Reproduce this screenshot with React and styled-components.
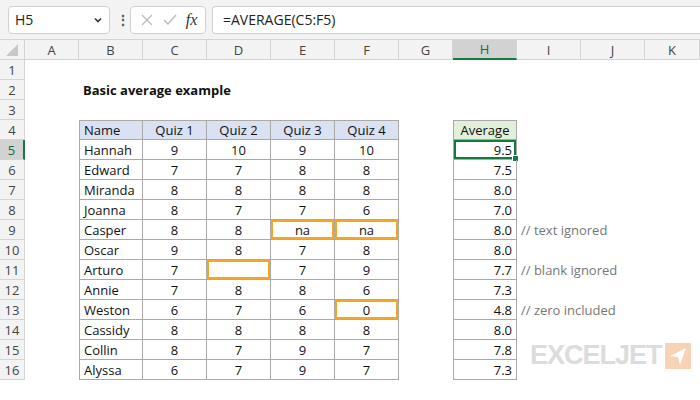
import React from 'react'
import styled, { createGlobalStyle } from 'styled-components'

const Global = createGlobalStyle`
  body { margin: 0; background: #fff; font-family: "Segoe UI", "Open Sans", "Noto Sans", sans-serif; }
`

const Page = styled.div`
  width: 700px;
  height: 400px;
  overflow: hidden;
  position: relative;
`

const Toolbar = styled.div`
  height: 40px;
  display: flex;
  align-items: center;
  gap: 6px;
  padding: 0 0 0 8px;
  background: #f3f3f3;
  border-bottom: 1px solid #d4d4d4;
  box-sizing: border-box;
`

const Box = styled.div`
  height: 28px;
  background: #fff;
  border: 1px solid #d0d0d0;
  border-radius: 4px;
  display: flex;
  align-items: center;
  box-sizing: border-box;
  font-size: 14px;
  color: #222;
`

const NameBox = styled(Box)`
  width: 102px;
  padding: 0 6px;
  justify-content: space-between;
`

const FxBox = styled(Box)`
  width: 76px;
  padding: 0 4px;
  justify-content: space-around;
`

const FormulaBox = styled(Box)`
  flex: 1;
  padding: 0 10px;
  border-right: none;
  border-radius: 4px 0 0 4px;
`

const Dots = styled.div`
  color: #555;
  font-weight: bold;
  font-size: 14px;
  width: 8px;
  text-align: center;
`

const Fx = styled.span`
  font-family: "Liberation Serif", serif;
  font-style: italic;
  font-size: 16px;
  color: #333;
`

const Grid = styled.div`
  display: grid;
  grid-template-columns: 25px 54px 64px 64px 64px 64px 64px 54px 64px 64px 64px 55px;
  grid-auto-rows: 20px;
`

const Cell = styled.div`
  box-sizing: border-box;
  font-size: 13px;
  display: flex;
  align-items: center;
  padding: 0 4px;
  white-space: nowrap;
  color: ${p => p.$gray ? '#777' : '#111'};
  font-weight: ${p => p.$bold ? 'bold' : 'normal'};
  justify-content: ${p => p.$align === 'c' ? 'center' : p.$align === 'r' ? 'flex-end' : 'flex-start'};
  background: ${p => p.$fill || 'transparent'};
  border-right: ${p => p.$table ? '1px solid #a9a9a9' : 'none'};
  border-bottom: ${p => p.$table ? '1px solid #a9a9a9' : 'none'};
  border-left: ${p => p.$tl ? '1px solid #a9a9a9' : 'none'};
  border-top: ${p => p.$tt ? '1px solid #a9a9a9' : 'none'};
  box-shadow: ${p => p.$mark ? `inset 0 0 0 2px ${p.$mark}` : 'none'};
  overflow: visible;
  position: relative;
`

const Head = styled.div`
  box-sizing: border-box;
  font-size: 13px;
  display: flex;
  align-items: center;
  justify-content: center;
  background: ${p => p.$sel ? '#d2d2d2' : '#f3f3f3'};
  color: ${p => p.$sel ? '#0f6e3c' : '#444'};
  border-right: 1px solid #d4d4d4;
  border-bottom: ${p => p.$sel && !p.$row ? '2px solid #107c41' : '1px solid #d4d4d4'};
  ${p => p.$row && p.$sel ? 'border-right: 2px solid #107c41;' : ''}
`

const Handle = styled.span`
  position: absolute;
  right: -3px;
  bottom: -3px;
  width: 5px;
  height: 5px;
  background: #107c41;
  border: 1px solid #fff;
`

const Logo = styled.div`
  position: absolute;
  left: 530px;
  top: 340px;
  display: flex;
  align-items: center;
  gap: 3px;
  font-family: "Liberation Sans", Arial, sans-serif;
  font-weight: bold;
  font-size: 27px;
  letter-spacing: -1px;
  color: #dcdcdc;
`

const cols = ['', 'A', 'B', 'C', 'D', 'E', 'F', 'G', 'H', 'I', 'J', 'K']
const data = [
  ['Hannah', 9, 10, 9, 10, '9.5'],
  ['Edward', 7, 7, 8, 8, '7.5'],
  ['Miranda', 8, 8, 8, 8, '8.0'],
  ['Joanna', 8, 7, 7, 6, '7.0'],
  ['Casper', 8, 8, 'na', 'na', '8.0', '// text ignored'],
  ['Oscar', 9, 8, 7, 8, '8.0'],
  ['Arturo', 7, '', 7, 9, '7.7', '// blank ignored'],
  ['Annie', 7, 8, 8, 6, '7.3'],
  ['Weston', 6, 7, 6, 0, '4.8', '// zero included'],
  ['Cassidy', 8, 8, 8, 8, '8.0'],
  ['Collin', 8, 7, 9, 7, '7.8'],
  ['Alyssa', 6, 7, 9, 7, '7.3'],
]
const orange = '#f5a623'
const marks = { '9-4': 1, '9-5': 1, '11-3': 1, '13-5': 1 }

export default function App() {
  const rows = []
  for (let r = 1; r <= 16; r++) {
    const cells = []
    for (let c = 1; c <= 11; c++) {
      const key = `${r}-${c}`
      let content = ''
      let props = {}
      if (r === 2 && c === 2) { content = 'Basic average example'; props.$bold = true }
      if (r === 4 && c >= 2 && c <= 6) {
        content = ['Name', 'Quiz 1', 'Quiz 2', 'Quiz 3', 'Quiz 4'][c - 2]
        props = { $table: true, $tt: true, $tl: c === 2, $fill: '#d9e1f2', $align: c === 2 ? 'l' : 'c' }
      }
      if (r === 4 && c === 8) {
        content = 'Average'
        props = { $table: true, $tt: true, $tl: true, $fill: '#e2efda', $align: 'c' }
      }
      if (r >= 5) {
        const d = data[r - 5]
        if (c >= 2 && c <= 6) {
          content = d[c - 2]
          props = { $table: true, $tl: c === 2, $align: c === 2 ? 'l' : 'c' }
          if (marks[`${r}-${c - 1}`]) props.$mark = orange
        }
        if (c === 8) {
          content = d[5]
          props = { $table: true, $tl: true, $align: 'r' }
          if (r === 5) props.$mark = '#107c41'
        }
        if (c === 9 && d[6]) { content = d[6]; props.$gray = true }
      }
      cells.push(
        <Cell key={key} {...props}>
          {content}
          {r === 5 && c === 8 && <Handle />}
        </Cell>
      )
    }
    rows.push(
      <React.Fragment key={r}>
        <Head $row $sel={r === 5}>{r}</Head>
        {cells}
      </React.Fragment>
    )
  }

  return (
    <Page>
      <Global />
      <Toolbar>
        <NameBox>
          H5
          <svg width="10" height="10" viewBox="0 0 10 10"><path d="M2 3.5l3 3 3-3" stroke="#333" strokeWidth="1.6" fill="none" /></svg>
        </NameBox>
        <Dots>⋮</Dots>
        <FxBox>
          <svg width="16" height="16" viewBox="0 0 16 16"><path d="M3 3l10 10M13 3L3 13" stroke="#bbb" strokeWidth="1.3" /></svg>
          <svg width="16" height="16" viewBox="0 0 16 16"><path d="M2 8l4 4 8-9" stroke="#bbb" strokeWidth="1.3" fill="none" /></svg>
          <Fx>fx</Fx>
        </FxBox>
        <FormulaBox>=AVERAGE(C5:F5)</FormulaBox>
      </Toolbar>
      <Grid>
        {cols.map((h, i) => (
          <Head key={i} $sel={h === 'H'}>
            {i === 0 ? <svg width="14" height="14" viewBox="0 0 14 14"><path d="M13 1V13H1Z" fill="#c8c8c8" /></svg> : h}
          </Head>
        ))}
        {rows}
      </Grid>
      <Logo>
        EXCELJET
        <svg width="26" height="26" viewBox="0 0 26 26">
          <rect width="26" height="26" fill="#f8d2b4" />
          <path d="M21 5L5 13l8 1 2 8z" fill="#fff" />
        </svg>
      </Logo>
    </Page>
  )
}
